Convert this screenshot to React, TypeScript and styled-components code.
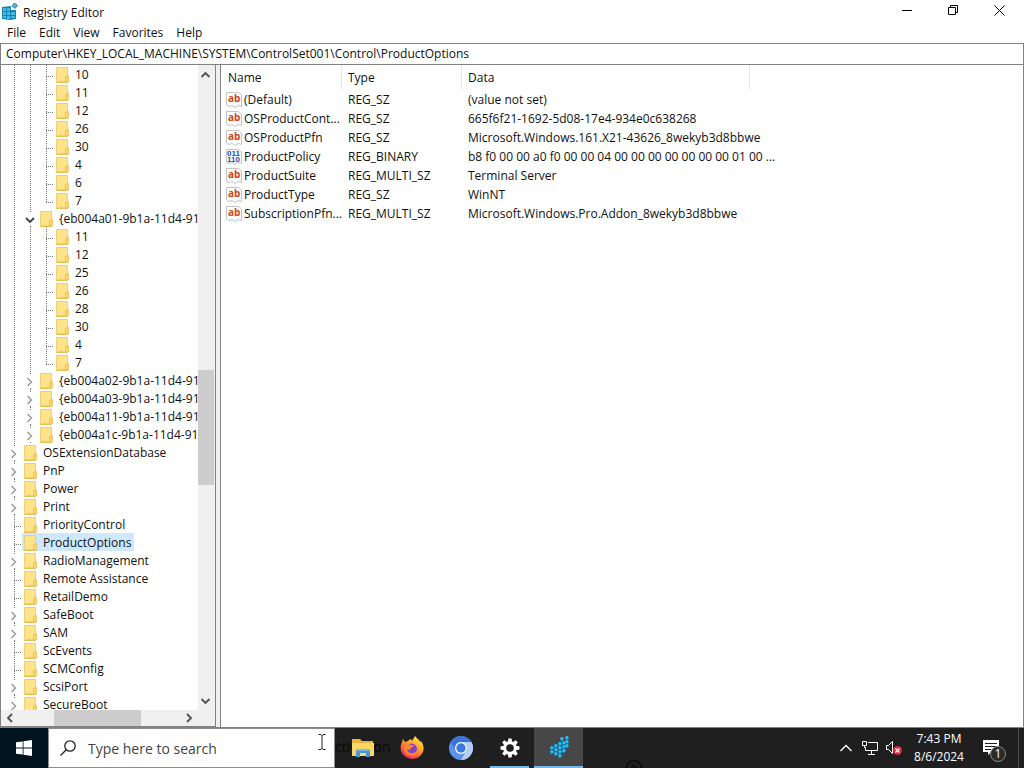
import React from "react";
import styled, { createGlobalStyle } from "styled-components";

const GlobalStyle = createGlobalStyle`
  * { box-sizing: border-box; }
  body { margin: 0; background: #ffffff; }
  body, button, input, table { font-family: "Open Sans", "Noto Sans", sans-serif; font-size: 12px; color: #111111; }
  button { border: 0; padding: 0; margin: 0; background: none; }
  svg { display: block; flex: none; }
`;

const Screen = styled.div`
  display: flex;
  flex-direction: column;
  height: 100vh;
  overflow: hidden;
`;

const TitleBar = styled.header`
  display: flex;
  align-items: center;
  height: 24px;
  padding: 0 2px;
`;

const Title = styled.h1`
  margin: 0;
  flex: 1;
  padding-left: 5px;
  font-size: 12px;
  font-weight: 400;
`;

const WindowButton = styled.button`
  display: grid;
  place-items: center;
  width: 46px;
  height: 24px;
  padding-bottom: 4px;
`;

const MenuBar = styled.nav`
  display: flex;
  gap: 1px;
  height: 19px;
  padding-left: 1px;
`;

const MenuItem = styled.button`
  padding: 0 6px;
  height: 18px;
  line-height: 18px;
`;

const Address = styled.input`
  width: 100%;
  height: 22px;
  padding: 0 5px 2px;
  border: 1px solid #828282;
  outline: 0;
`;

const Panes = styled.main`
  flex: 1;
  min-height: 0;
  display: grid;
  grid-template-columns: 216px minmax(0, 1fr);
  column-gap: 4px;
  background: #f0f0f0;
  border-bottom: 1px solid #828282;
`;

const TreePane = styled.section`
  display: grid;
  grid-template-columns: minmax(0, 1fr) 16px;
  grid-template-rows: minmax(0, 1fr) 16px;
  padding-right: 1px;
  border: 1px solid #828282;
  border-top: 0;
  background: #f0f0f0;
  min-height: 0;
`;

const Tree = styled.ul`
  margin: 0;
  padding: 0 0 0 5px;
  list-style: none;
  overflow: hidden;
  background: #ffffff;
`;

const TreeRow = styled.li`
  display: flex;
  height: 18px;
`;

const Toggle = styled.button`
  flex: none;
  width: 16px;
  height: 18px;
`;

const TreeLabel = styled.button<{ $selected: boolean }>`
  display: flex;
  align-items: center;
  flex: none;
  gap: 6px;
  height: 18px;
  padding: 0 3px 0 2px;
  white-space: nowrap;
  background: ${(p) => (p.$selected ? "#cde8ff" : "transparent")};
`;

const ScrollTrack = styled.div<{ $vertical?: boolean }>`
  display: flex;
  flex-direction: ${(p) => (p.$vertical ? "column" : "row")};
  background: #f0f0f0;
`;

const ScrollArrow = styled.button`
  display: grid;
  place-items: center;
  width: 16px;
  height: 16px;
  flex: none;
`;

const ScrollPart = styled.div<{ $size: number; $thumb?: boolean }>`
  flex: ${(p) => p.$size} 1 0;
  background: ${(p) => (p.$thumb ? "#cdcdcd" : "transparent")};
`;

const ValuesPane = styled.section`
  border: 1px solid #828282;
  border-width: 0 1px 0 1px;
  padding-left: 1px;
  background: #ffffff;
`;

const Values = styled.table`
  table-layout: fixed;
  width: 528px;
  border-collapse: separate;
  border-spacing: 0;

  th {
    height: 25px;
    padding: 0 6px;
    text-align: left;
    font-weight: 400;
    border-right: 1px solid #e5e5e5;
  }
  td {
    height: 19px;
    padding: 0 0 0 6px;
    line-height: 18px;
    white-space: nowrap;
  }
  td:first-child { padding-left: 4px; }
`;

const NameCell = styled.div`
  display: flex;
  align-items: center;
  gap: 2px;
`;

const Taskbar = styled.footer`
  position: relative;
  display: flex;
  height: 40px;
  flex: none;
  background: #1f1f1f;
`;

const Start = styled.button`
  display: grid;
  place-items: center;
  width: 48px;
  background: #02141f;
`;

const SearchBox = styled.label`
  position: relative;
  display: flex;
  align-items: center;
  gap: 12px;
  width: 287px;
  padding-left: 11px;
  border: 1px solid #8c8c8c;
  background: #ffffff;

  input {
    flex: 1;
    min-width: 0;
    padding: 0;
    border: 0;
    outline: 0;
    background: none;
    font-size: 14px;
  }
  input::placeholder { color: #444444; opacity: 1; }
`;

const Pointer = styled.svg`
  position: absolute;
  right: 8px;
  top: 5px;
`;

const GhostText = styled.span`
  position: absolute;
  left: 335px;
  top: 9px;
  font-size: 14px;
  color: #090909;
`;

const GhostRing = styled.svg`
  position: absolute;
  left: 624px;
  bottom: 0;
`;

const Tasks = styled.div`
  display: flex;
  flex: 1;
  padding-left: 3px;
`;

const Task = styled.button<{ $state?: "open" | "active" }>`
  position: relative;
  display: grid;
  place-items: center;
  width: 49px;
  background: ${(p) => (p.$state === "active" ? "#474747" : "transparent")};

  &::after {
    content: "";
    position: absolute;
    bottom: 0;
    left: ${(p) => (p.$state === "active" ? 0 : 5)}px;
    right: ${(p) => (p.$state === "active" ? 0 : 5)}px;
    height: 2px;
    background: ${(p) => (p.$state ? "#76b9ed" : "transparent")};
  }
`;

const Tray = styled.div`
  display: flex;
  align-items: center;
  padding-right: 5px;
`;

const TrayButton = styled.button<{ $width: number }>`
  display: grid;
  place-items: center;
  width: ${(p) => p.$width}px;
  height: 40px;
`;

const Clock = styled.time`
  width: 66px;
  text-align: center;
  line-height: 18px;
  color: #ffffff;
`;

const ShowDesktop = styled.button`
  width: 1px;
  height: 40px;
  margin-left: 4px;
  background: #4a4a4a;
`;

type Line = "v" | "t" | "l" | "c" | "o";

interface Node {
  lines: string;
  name: string;
  selected?: boolean;
}

const leaves = (names: string[]): Node[] =>
  names.map((name, i) => ({ name, lines: i === names.length - 1 ? "vvl" : "vvt" }));

const nodes: Node[] = [
  ...leaves(["10", "11", "12", "26", "30", "4", "6", "7"]),
  { lines: "vo", name: "{eb004a01-9b1a-11d4-9123" },
  ...leaves(["11", "12", "25", "26", "28", "30", "4", "7"]),
  { lines: "vc", name: "{eb004a02-9b1a-11d4-9123" },
  { lines: "vc", name: "{eb004a03-9b1a-11d4-9123" },
  { lines: "vc", name: "{eb004a11-9b1a-11d4-9123" },
  { lines: "vc", name: "{eb004a1c-9b1a-11d4-9123" },
  { lines: "c", name: "OSExtensionDatabase" },
  { lines: "c", name: "PnP" },
  { lines: "c", name: "Power" },
  { lines: "c", name: "Print" },
  { lines: "t", name: "PriorityControl" },
  { lines: "t", name: "ProductOptions", selected: true },
  { lines: "c", name: "RadioManagement" },
  { lines: "t", name: "Remote Assistance" },
  { lines: "t", name: "RetailDemo" },
  { lines: "c", name: "SafeBoot" },
  { lines: "c", name: "SAM" },
  { lines: "t", name: "ScEvents" },
  { lines: "t", name: "SCMConfig" },
  { lines: "c", name: "ScsiPort" },
  { lines: "c", name: "SecureBoot" },
];

const values = [
  ["(Default)", "REG_SZ", "(value not set)"],
  ["OSProductCont...", "REG_SZ", "665f6f21-1692-5d08-17e4-934e0c638268"],
  ["OSProductPfn", "REG_SZ", "Microsoft.Windows.161.X21-43626_8wekyb3d8bbwe"],
  ["ProductPolicy", "REG_BINARY", "b8 f0 00 00 a0 f0 00 00 04 00 00 00 00 00 00 00 01 00 ..."],
  ["ProductSuite", "REG_MULTI_SZ", "Terminal Server"],
  ["ProductType", "REG_SZ", "WinNT"],
  ["SubscriptionPfn...", "REG_MULTI_SZ", "Microsoft.Windows.Pro.Addon_8wekyb3d8bbwe"],
];

const Guide = ({ kind }: { kind: Line }) => (
  <svg width="16" height="18" fill="none" aria-hidden="true">
    <g stroke="#7a7a7a" strokeDasharray="1 1">
      {(kind === "v" || kind === "t") && <path d="M8.500 0V18" />}
      {kind === "l" && <path d="M8.500 0V11" />}
      {(kind === "t" || kind === "l") && <path d="M8 11.500H16" />}
      {(kind === "c" || kind === "o") && <path d="M8.500 0V4M8.500 17V18" />}
    </g>
    {kind === "c" && <path d="M5.500 7l4 4-4 4" stroke="#a0a0a0" strokeWidth="1.600" />}
    {kind === "o" && <path d="M4 9l4 4 4-4" stroke="#404040" strokeWidth="1.800" />}
  </svg>
);

const Folder = () => (
  <svg width="13" height="18" aria-hidden="true">
    <path d="M.5 2.500H11.500V16.500H.5z" fill="#ffe48c" stroke="#f0cf72" />
    <path d="M9.500 11.500l3-1V17H9.500z" fill="#f9d871" stroke="#e6bd55" strokeWidth=".8" />
    <path d="M0 17.500H12" stroke="#e8c158" />
  </svg>
);

const ARROWS = {
  up: "M3.500 12l4-4 4 4",
  down: "M3.500 5l4 4 4-4",
  left: "M11 4l-4 4 4 4",
  right: "M5 4l4 4-4 4",
};

const Arrow = ({ to }: { to: keyof typeof ARROWS }) => (
  <svg width="16" height="16" fill="none" stroke="#505050" strokeWidth="1.800" aria-hidden="true">
    <path d={ARROWS[to]} />
  </svg>
);

const ValueIcon = ({ binary }: { binary: boolean }) => (
  <svg width="16" height="16" aria-hidden="true">
    <path d="M.5 .5H12.500L15.500 3V14.500L12 13.500L9 15.500L6 13.500L3 14.500L.5 13z" fill="#fdfdfd" stroke="#c4c4c4" />
    {binary ? (
      <g fill="#2a48b8" fontFamily="Liberation Sans" fontWeight="700" fontSize="8">
        <text x="1" y="7">011</text>
        <text x="1" y="13">110</text>
      </g>
    ) : (
      <text x="2" y="10" fill="#cf4520" fontFamily="Open Sans" fontWeight="700" fontSize="10">ab</text>
    )}
  </svg>
);

const AppIcon = () => (
  <svg width="16" height="18" viewBox="0 0 16 18" aria-hidden="true">
    <path d="M0 4L9 3V7H14V16L8 17L0 16z" fill="#1583b5" />
    <path d="M1 5h3v3H1zM5 5h3v3H5zM1 9h3v3H1zM5 9h3v3H5zM9 9h4v3H9zM1 13h3v2H1zM5 13h3v3H5zM9 13h4v2H9z" fill="#43b9e3" />
    <path d="M12.500 0l3 2.500-2.500 3-3-2.500z" fill="#59b5d8" stroke="#176f99" strokeWidth=".8" />
  </svg>
);

const cubes = [
  [1, 11], [1, 15], [5, 9], [5, 13], [5, 17], [9, 7], [9, 11], [9, 15], [9, 19],
  [13, 6], [13, 10], [13, 14], [11, 2], [16, 1], [16, 5], [16, 9],
];

const RegistryTaskIcon = () => (
  <svg width="20" height="24" viewBox="0 0 20 24" aria-hidden="true">
    {cubes.map(([x, y]) => (
      <g key={`${x}-${y}`}>
        <path d={`M${x} ${y}l2-1 1.500 1v2.500l-2 1-1.500-1z`} fill="#117fb3" />
        <path d={`M${x} ${y}l2-1 1.500 1v1.500l-2 .8z`} fill="#35bdf0" />
      </g>
    ))}
  </svg>
);

const Explorer = () => (
  <svg width="22" height="20" viewBox="0 0 22 20" aria-hidden="true">
    <path d="M0 1H8L10 3H21V18H0z" fill="#e9b53a" />
    <path d="M0 5H22V18H0z" fill="#fbd766" />
    <path d="M4 19V11H18V19H14V15H8V19z" fill="#4796d8" />
    <path d="M4 11H18V13H4z" fill="#79baf0" />
  </svg>
);

const Firefox = () => (
  <svg width="24" height="24" viewBox="0 0 24 24" aria-hidden="true">
    <defs>
      <linearGradient id="fox" x1="0.800" y1="0.100" x2="0.200" y2="1">
        <stop offset="0" stopColor="#ffe143" />
        <stop offset=".4" stopColor="#ff9a2b" />
        <stop offset=".75" stopColor="#ff4a46" />
        <stop offset="1" stopColor="#dd1c72" />
      </linearGradient>
    </defs>
    <path d="M15 0c1 2 4 3 5 6l1-1c2 3 3 6 2.500 9A11.500 10.500 0 0 1 1 15C0 11 1 8 2 6l1-3 2 3 3-1c1-1 2-2 3-2l1 2z" fill="url(#fox)" />
    <circle cx="11.500" cy="13" r="5.500" fill="#8444c8" />
    <path d="M4 8c3-1 5 0 7 1l3 0c-1 2-3 2-3 3 0 2-3 2-4 1 0 3 3 5 6 4 3 0 5-3 4-6 2 4 0 9-6 9C5 20 3 14 4 8z" fill="#ff862e" />
  </svg>
);

const Chromium = () => (
  <svg width="24" height="24" viewBox="0 0 24 24" aria-hidden="true">
    <circle cx="12" cy="12" r="12" fill="#5b93ec" />
    <path d="M1.600 6A12 12 0 0 1 22.400 6H12A6 6 0 0 0 6.800 15z" fill="#3d72d6" />
    <path d="M22.400 6A12 12 0 0 1 12 24L17.200 15A6 6 0 0 0 12 6z" fill="#b2cdf8" />
    <circle cx="12" cy="12" r="6" fill="#ffffff" />
    <circle cx="12" cy="12" r="4.700" fill="#3b78e0" />
  </svg>
);

const Gear = () => (
  <svg width="20" height="20" viewBox="-10 -10 20 20" aria-hidden="true">
    {[0, 45, 90, 135, 180, 225, 270, 315].map((a) => (
      <path key={a} d="M-2.200 -6L-1.500 -9.500H1.500L2.200 -6z" fill="#ffffff" transform={`rotate(${a})`} />
    ))}
    <circle r="5.300" fill="none" stroke="#ffffff" strokeWidth="3" />
  </svg>
);

export default function App() {
  return (
    <Screen>
      <GlobalStyle />
      <TitleBar>
        <AppIcon />
        <Title>Registry Editor</Title>
        <WindowButton aria-label="Minimize">
          <svg width="10" height="10"><path d="M0 5.500H10" stroke="#000" /></svg>
        </WindowButton>
        <WindowButton aria-label="Restore">
          <svg width="10" height="10" fill="none" stroke="#000"><path d="M.5 2.500H7.500V9.500H.5zM2.500 2.500V.5H9.500V7.500H7.500" /></svg>
        </WindowButton>
        <WindowButton aria-label="Close">
          <svg width="11" height="11" stroke="#000"><path d="M.5 .5L10.500 10.500M10.500 .5L.5 10.500" /></svg>
        </WindowButton>
      </TitleBar>
      <MenuBar>
        {["File", "Edit", "View", "Favorites", "Help"].map((m) => (
          <MenuItem key={m}>{m}</MenuItem>
        ))}
      </MenuBar>
      <Address
        aria-label="Address"
        defaultValue={"Computer\\HKEY_LOCAL_MACHINE\\SYSTEM\\ControlSet001\\Control\\ProductOptions"}
      />
      <Panes>
        <TreePane>
          <Tree role="tree" aria-label="Keys">
            {nodes.map((node, i) => (
              <TreeRow key={i} role="treeitem" aria-selected={!!node.selected}>
                {node.lines.split("").map((kind, k) =>
                  kind === "c" || kind === "o" ? (
                    <Toggle key={k} aria-label={kind === "c" ? "Expand" : "Collapse"}>
                      <Guide kind={kind} />
                    </Toggle>
                  ) : (
                    <Guide key={k} kind={kind as Line} />
                  ),
                )}
                <TreeLabel $selected={!!node.selected}>
                  <Folder />
                  {node.name}
                </TreeLabel>
              </TreeRow>
            ))}
          </Tree>
          <ScrollTrack $vertical>
            <ScrollArrow aria-label="Scroll up"><Arrow to="up" /></ScrollArrow>
            <ScrollPart $size={288} />
            <ScrollPart $size={115} $thumb />
            <ScrollPart $size={208} />
            <ScrollArrow aria-label="Scroll down"><Arrow to="down" /></ScrollArrow>
          </ScrollTrack>
          <ScrollTrack>
            <ScrollArrow aria-label="Scroll left"><Arrow to="left" /></ScrollArrow>
            <ScrollPart $size={37} />
            <ScrollPart $size={87} $thumb />
            <ScrollPart $size={41} />
            <ScrollArrow aria-label="Scroll right"><Arrow to="right" /></ScrollArrow>
          </ScrollTrack>
        </TreePane>
        <ValuesPane>
          <Values>
            <colgroup>
              <col width="120" />
              <col width="120" />
              <col width="288" />
            </colgroup>
            <thead>
              <tr>
                <th>Name</th>
                <th>Type</th>
                <th>Data</th>
              </tr>
            </thead>
            <tbody>
              {values.map(([name, type, data]) => (
                <tr key={name}>
                  <td>
                    <NameCell>
                      <ValueIcon binary={type === "REG_BINARY"} />
                      <span>{name}</span>
                    </NameCell>
                  </td>
                  <td>{type}</td>
                  <td>{data}</td>
                </tr>
              ))}
            </tbody>
          </Values>
        </ValuesPane>
      </Panes>
      <Taskbar>
        <Start aria-label="Start">
          <svg width="16" height="16" fill="#ffffff">
            <path d="M0 2.300L6.700 1.400V7.600H0zM7.500 1.300L16 0V7.600H7.500zM0 8.400H6.700V14.600L0 13.700zM7.500 8.400H16V16L7.500 14.700z" />
          </svg>
        </Start>
        <SearchBox>
          <svg width="16" height="16" fill="none" stroke="#222222" strokeWidth="1.300">
            <circle cx="10" cy="6" r="5.200" />
            <path d="M6.300 9.700L.5 15.500" />
          </svg>
          <input placeholder="Type here to search" aria-label="Search" />
          <Pointer width="8" height="16" fill="none" stroke="#222222">
            <path d="M.5 .5H3L4 1.500L5 .5H7.500M4 1V15M.5 15.500H3L4 14.500L5 15.500H7.500" />
          </Pointer>
        </SearchBox>
        <GhostText aria-hidden="true">ctivation</GhostText>
        <GhostRing width="20" height="9" fill="none" stroke="#0c0c0c" strokeWidth="1.500" aria-hidden="true">
          <circle cx="10" cy="9" r="7.500" />
          <path d="M8 9a2 2 0 1 1 4 0" />
        </GhostRing>
        <Tasks>
          <Task aria-label="File Explorer"><Explorer /></Task>
          <Task aria-label="Firefox"><Firefox /></Task>
          <Task aria-label="Chromium"><Chromium /></Task>
          <Task aria-label="Settings" $state="open"><Gear /></Task>
          <Task aria-label="Registry Editor" $state="active"><RegistryTaskIcon /></Task>
        </Tasks>
        <Tray>
          <TrayButton $width={24} aria-label="Show hidden icons">
            <svg width="12" height="8" fill="none" stroke="#ffffff" strokeWidth="1.300"><path d="M.5 7L6 1.500L11.500 7" /></svg>
          </TrayButton>
          <TrayButton $width={24} aria-label="Network">
            <svg width="16" height="16" fill="none" stroke="#ffffff">
              <path d="M6 2.500H15.500V10.500H3.500V7M.5 1.500H4.500V5.500H.5zM2.500 5.500V7.500H4M9.500 10.500V14M6 14.500H13" />
            </svg>
          </TrayButton>
          <TrayButton $width={24} aria-label="Volume muted">
            <svg width="18" height="16" fill="none">
              <path d="M1.500 5.500H3.500L7.500 1.500V13.500L3.500 9.500H1.500z" stroke="#ffffff" />
              <circle cx="12.500" cy="10.500" r="4.500" fill="#d8283c" />
              <path d="M10.500 8.500L14.500 12.500M14.500 8.500L10.500 12.500" stroke="#ffffff" strokeWidth="1.200" />
            </svg>
          </TrayButton>
          <Clock>
            7:43 PM
            <br />
            8/6/2024
          </Clock>
          <TrayButton $width={42} aria-label="Notifications, 1 new">
            <svg width="28" height="30">
              <path d="M4 7H20V19H12L9 22V19H4z" fill="#ffffff" />
              <path d="M6 10.500H18M6 13.500H18M6 16.500H12" stroke="#1f1f1f" />
              <circle cx="19" cy="21" r="7.500" fill="#2b2b2b" stroke="#8a8a8a" />
              <text x="19" y="25" textAnchor="middle" fontFamily="Open Sans" fontSize="12" fill="#ffffff">1</text>
            </svg>
          </TrayButton>
          <ShowDesktop aria-label="Show desktop" />
        </Tray>
      </Taskbar>
    </Screen>
  );
}
